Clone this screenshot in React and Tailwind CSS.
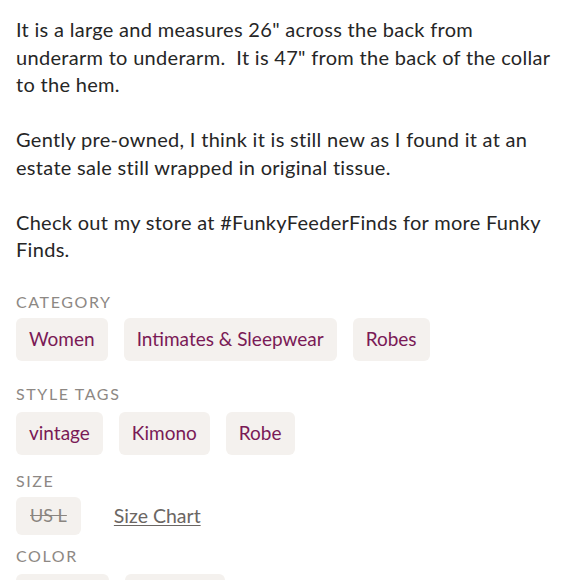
const chip = 'flex items-center h-[43px] px-[13px] rounded-[6px] bg-[#f4f1ee] text-[19px] text-[#7a1a56]';
const label = 'text-[16px] leading-[20px] tracking-[0.1em] uppercase text-[#8d8884]';

function Chips({ items }) {
  return (
    <div className="flex flex-wrap gap-4">
      {items.map(t => (
        <span key={t} className={chip}>{t}</span>
      ))}
    </div>
  );
}

export default function App() {
  return (
    <div className="w-[580px] h-[580px] overflow-hidden bg-white px-4 pt-[16px]" style={{ fontFamily: 'Lato, "Open Sans", sans-serif' }}>
      <div className="text-[20px] leading-[27.5px] tracking-[0.3px] text-[#262626] whitespace-nowrap">
        It is a large and measures 26" across the back from<br />
        underarm to underarm.&nbsp; It is 47" from the back of the collar<br />
        to the hem.<br />
        <br />
        Gently pre-owned, I think it is still new as I found it at an<br />
        estate sale still wrapped in original tissue.<br />
        <br />
        Check out my store at #FunkyFeederFinds for more Funky<br />
        Finds.
      </div>

      <div className={`${label} mt-[28px] mb-[6px]`}>Category</div>
      <Chips items={['Women', 'Intimates & Sleepwear', 'Robes']} />

      <div className={`${label} mt-[23px] mb-[8px]`}>Style Tags</div>
      <Chips items={['vintage', 'Kimono', 'Robe']} />

      <div className={`${label} mt-[16px] mb-[6px]`}>Size</div>
      <div className="flex items-center gap-[33px]">
        <span className="flex items-center h-[38px] px-[14px] rounded-[6px] bg-[#f4f1ee] text-[18px] text-[#8a8580] line-through">US L</span>
        <span className="text-[19.5px] text-[#6b6663] underline underline-offset-2">Size Chart</span>
      </div>

      <div className={`${label} mt-[11px] mb-[8px]`}>Color</div>
      <div className="flex gap-4">
        <span className="block h-[43px] w-[93px] rounded-[6px] bg-[#f4f1ee]"></span>
        <span className="block h-[43px] w-[100px] rounded-[6px] bg-[#f4f1ee]"></span>
      </div>
    </div>
  );
}
